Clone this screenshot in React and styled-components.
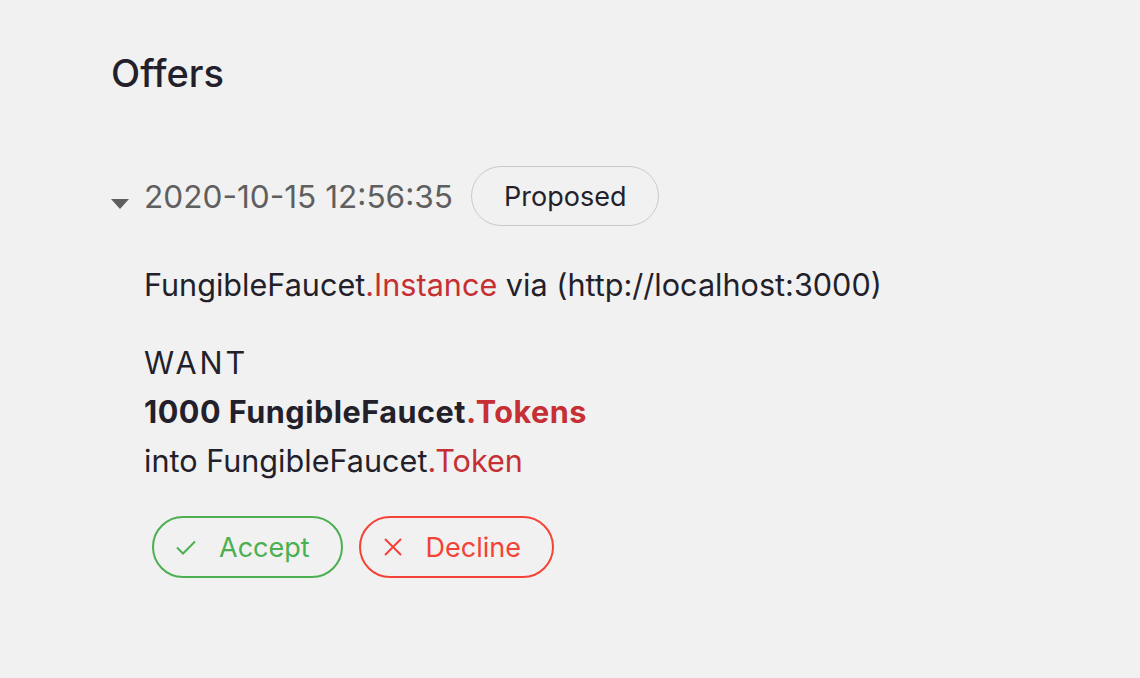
import React from "react";
import styled, { createGlobalStyle } from "styled-components";

const GlobalStyle = createGlobalStyle`
  html, body {
    margin: 0;
    background: #f1f1f1;
    font-family: Inter, "Noto Sans", sans-serif;
    color: #231f2b;
  }
`;

const Page = styled.div`
  padding: 50px 0 0 111px;
`;

const Title = styled.h1`
  margin: 0;
  font-size: 38px;
  font-weight: 500;
  line-height: 46px;
`;

const Offer = styled.div`
  margin-top: 70px;
`;

const Header = styled.div`
  display: flex;
  align-items: center;
  gap: 18px;
`;

const Caret = styled.span`
  width: 0;
  height: 0;
  border-left: 9px solid transparent;
  border-right: 9px solid transparent;
  border-top: 10px solid #5f5f5f;
  margin-top: 16px;
  margin-right: -3px;
`;

const Date = styled.span`
  font-size: 31.6px;
  color: #5f5f5f;
`;

const Chip = styled.span`
  display: inline-flex;
  align-items: center;
  height: 58px;
  padding: 0 32px;
  border: 1px solid #cacaca;
  border-radius: 30px;
  font-size: 27px;
  color: #231f2b;
`;

const Body = styled.div`
  padding-left: 33px;
  font-size: 30.6px;
  line-height: 49px;
`;

const Source = styled.div`
  margin-top: 34px;
`;

const Want = styled.div`
  margin-top: 29px;
  font-weight: 400;
  letter-spacing: 3px;
`;

const Amount = styled.div`
  font-weight: 700;
  letter-spacing: 0.5px;
`;

const Red = styled.span`
  color: #c62f34;
`;

const Actions = styled.div`
  display: flex;
  gap: 16px;
  margin-top: 31px;
  margin-left: 41px;
`;

const Action = styled.button`
  display: inline-flex;
  align-items: center;
  gap: 21px;
  height: 62px;
  padding: 0 31px 0 20px;
  background: transparent;
  border: 2px solid ${(p) => p.color};
  border-radius: 31px;
  color: ${(p) => p.color};
  font-family: Inter, sans-serif;
  font-size: 27px;
  svg {
    width: 24px;
    height: 24px;
  }
`;

export default function App() {
  return (
    <>
      <GlobalStyle />
      <Page>
        <Title>Offers</Title>
        <Offer>
          <Header>
            <Caret />
            <Date>2020-10-15 12:56:35</Date>
            <Chip>Proposed</Chip>
          </Header>
          <Body>
            <Source>
              FungibleFaucet<Red>.Instance</Red> via (http://localhost:3000)
            </Source>
            <Want>WANT</Want>
            <Amount>
              1000 FungibleFaucet<Red>.Tokens</Red>
            </Amount>
            <div>
              into FungibleFaucet<Red>.Token</Red>
            </div>
          </Body>
          <Actions>
            <Action color="#4caf50">
              <svg viewBox="0 0 24 24" fill="none" stroke="currentColor" strokeWidth="2">
                <path d="M3 12.5l6 6L21 6.5" />
              </svg>
              Accept
            </Action>
            <Action color="#f44336">
              <svg viewBox="0 0 24 24" fill="none" stroke="currentColor" strokeWidth="2">
                <path d="M4 4l16 16M20 4L4 20" />
              </svg>
              Decline
            </Action>
          </Actions>
        </Offer>
      </Page>
    </>
  );
}
